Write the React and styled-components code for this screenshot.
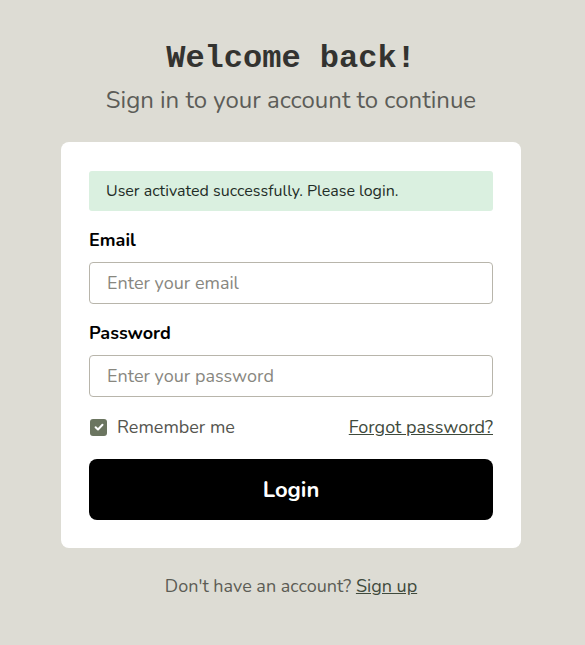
import React, { useState } from "react";
import styled, { createGlobalStyle } from "styled-components";

const GlobalStyle = createGlobalStyle`
  body {
    margin: 0;
    background: #dddcd4;
    font-family: "Nunito", "Lato", "Noto Sans", sans-serif;
  }
`;

function App() {
  const [email, setEmail] = useState("");
  const [password, setPassword] = useState("");
  const [remember, setRemember] = useState(true);

  return (
    <>
      <GlobalStyle />
      <Page>
        <Title>Welcome back!</Title>
        <Subtitle>Sign in to your account to continue</Subtitle>
        <Card>
          <Alert>User activated successfully. Please login.</Alert>
          <Field>
            <Label htmlFor="email">Email</Label>
            <Input
              id="email"
              type="email"
              placeholder="Enter your email"
              value={email}
              onChange={(e) => setEmail(e.target.value)}
            />
          </Field>
          <Field>
            <Label htmlFor="password">Password</Label>
            <Input
              id="password"
              type="password"
              placeholder="Enter your password"
              value={password}
              onChange={(e) => setPassword(e.target.value)}
            />
          </Field>
          <OptionsRow>
            <CheckLabel onClick={() => setRemember(!remember)}>
              <CheckBox checked={remember}>
                {remember && (
                  <svg width="12" height="12" viewBox="0 0 12 12">
                    <path
                      d="M2.6 6.2 L5 8.5 L9.5 3.7"
                      fill="none"
                      stroke="#fff"
                      strokeWidth="2"
                      strokeLinecap="round"
                      strokeLinejoin="round"
                    />
                  </svg>
                )}
              </CheckBox>
              Remember me
            </CheckLabel>
            <TextLink href="#">Forgot password?</TextLink>
          </OptionsRow>
          <LoginBtn>Login</LoginBtn>
        </Card>
        <Footer>
          Don't have an account? <TextLink href="#">Sign up</TextLink>
        </Footer>
      </Page>
    </>
  );
}

export default App;

const Page = styled.div`
  display: flex;
  flex-direction: column;
  align-items: center;
  padding: 39px 3px 0 0;
`;
const Title = styled.h1`
  font-family: "Liberation Mono", "Courier New", monospace;
  font-weight: 700;
  font-size: 32px;
  color: #333330;
  margin: 0;
  line-height: 40px;
`;
const Subtitle = styled.p`
  font-size: 24px;
  color: #5c5c58;
  margin: 5px 0 0;
  line-height: 32px;
`;
const Card = styled.div`
  box-sizing: border-box;
  width: 460px;
  margin-top: 26px;
  background: #fff;
  border-radius: 8px;
  padding: 29px 28px 28px;
  display: flex;
  flex-direction: column;
`;
const Alert = styled.div`
  background: #daf0e0;
  color: #1f2d27;
  border-radius: 3px;
  height: 40px;
  display: flex;
  align-items: center;
  padding: 0 17px;
  font-size: 16px;
`;
const Field = styled.div`
  display: flex;
  flex-direction: column;
  margin-top: 17px;
`;
const Label = styled.label`
  font-weight: 700;
  font-size: 18px;
  color: #000;
  line-height: 24px;
  margin-bottom: 10px;
`;
const Input = styled.input`
  box-sizing: border-box;
  height: 42px;
  border: 1px solid #b8b5ab;
  border-radius: 4px;
  padding: 0 17px;
  font-family: inherit;
  font-size: 18px;
  color: #222;
  outline: none;
  &::placeholder {
    color: #88877f;
  }
`;
const OptionsRow = styled.div`
  display: flex;
  justify-content: space-between;
  align-items: center;
  margin-top: 18px;
  height: 24px;
`;
const CheckLabel = styled.label`
  display: flex;
  align-items: center;
  gap: 10px;
  font-size: 18px;
  color: #55554f;
  cursor: pointer;
  padding-left: 1px;
`;
const CheckBox = styled.span`
  width: 17px;
  height: 17px;
  border-radius: 3px;
  background: ${(p) => (p.checked ? "#6b7560" : "#fff")};
  border: ${(p) => (p.checked ? "none" : "1px solid #999")};
  display: flex;
  align-items: center;
  justify-content: center;
`;
const TextLink = styled.a`
  color: #3f4a3c;
  font-size: 18px;
  text-decoration: underline;
`;
const LoginBtn = styled.button`
  margin-top: 20px;
  height: 61px;
  border: none;
  border-radius: 8px;
  background: #000;
  color: #fff;
  font-family: inherit;
  font-weight: 700;
  font-size: 22px;
  cursor: pointer;
`;
const Footer = styled.p`
  margin: 26px 0 0;
  font-size: 18px;
  color: #5c5c55;
  line-height: 24px;
`;
